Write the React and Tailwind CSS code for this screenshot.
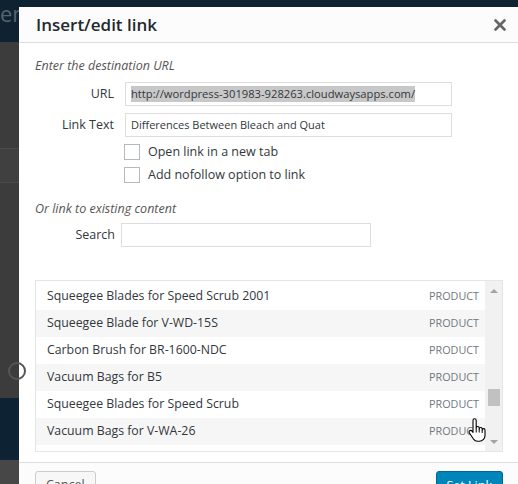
import { X } from 'lucide-react';

const results = [
  'Squeegee Blades for Speed Scrub 2001',
  'Squeegee Blade for V-WD-15S',
  'Carbon Brush for BR-1600-NDC',
  'Vacuum Bags for B5',
  'Squeegee Blades for Speed Scrub',
  'Vacuum Bags for V-WA-26',
];

function HandCursor() {
  return (
    <svg width="18" height="24" viewBox="0 0 18 24" className="absolute left-[468px] top-[418px]">
      <path
        d="M5 2.5c0-1 .7-1.7 1.6-1.7s1.6.7 1.6 1.7V10c0-.9.7-1.5 1.5-1.5s1.5.6 1.5 1.5v1c0-.9.7-1.5 1.5-1.5s1.5.6 1.5 1.5v1c0-.8.6-1.4 1.4-1.4s1.4.6 1.4 1.4v5.5c0 3-2.2 5.7-5.6 5.7H9.6c-2 0-3.2-.9-4.3-2.4L1.4 15c-.6-.8-.4-1.8.4-2.3.8-.5 1.7-.3 2.3.4L5 14.4Z"
        fill="#fff"
        stroke="#000"
        strokeWidth="1.1"
        strokeLinejoin="round"
      />
      <path d="M8.2 10v4.5M11.2 11v3.5M14.2 12v3" stroke="#000" strokeWidth="1" />
    </svg>
  );
}

function Row({ title, i }) {
  return (
    <div className={`flex h-[27px] items-center justify-between pl-[11px] pr-[6px] ${i % 2 ? 'bg-[#f6f6f6]' : 'bg-white'}`}>
      <span className="text-[12.3px] text-[#32373c]">{title}</span>
      <span className="text-[10.8px] uppercase text-[#72777c]">Product</span>
    </div>
  );
}

export default function App() {
  return (
    <div
      className="relative flex h-[484px] w-[518px] overflow-hidden bg-[#0e2232]"
      style={{ fontFamily: '"Open Sans", "Noto Sans", sans-serif' }}
    >
      {/* dimmed admin behind the modal */}
      <div className="flex w-[19px] shrink-0 flex-col">
        <div className="h-[42px] overflow-hidden bg-[#0e2232] pt-[2px] text-[22px] leading-none text-[#58646d]">em</div>
        <div className="h-[106px] bg-[#3c3c3c]" />
        <div className="h-[35px] border-y border-[#4a4a4a] bg-[#404040]" />
        <div className="relative h-[215px] bg-[#3c3c3c]">
          <div className="absolute left-[8px] top-[179px] h-[18px] w-[18px] rounded-full border-2 border-[#555]" />
        </div>
        <div className="h-[62px] bg-[#0d2333]" />
        <div className="flex-1 bg-[#474747]" />
      </div>

      {/* modal */}
      <div className="mt-[7px] flex w-[510px] shrink-0 flex-col bg-white">
        <div className="flex h-[36px] shrink-0 items-center justify-between border-b border-[#dddddd] bg-[#fcfcfc] pl-[17px] pr-[20px]">
          <h1 className="text-[17px] font-semibold text-[#23282d]">Insert/edit link</h1>
          <X size={18} strokeWidth={3.6} className="text-[#666]" />
        </div>

        <div className="flex flex-col pl-[16px] pt-[14px]">
          <p className="text-[12.5px] italic leading-[18px] text-[#555]">Enter the destination URL</p>

          <div className="mt-[7px] flex flex-col gap-[7px]">
            <div className="flex items-center">
              <label className="w-[80px] pr-[1px] text-right text-[12.5px] text-[#32373c]">URL</label>
              <div className="ml-[10px] flex h-[24px] w-[327px] items-center overflow-hidden whitespace-nowrap border border-[#dddddd] px-[5px] text-[11.2px] text-[#32373c]">
                <span className="bg-[#c8c8c8]">http://wordpress-301983-928263.cloudwaysapps.com/</span>
              </div>
            </div>
            <div className="flex items-center">
              <label className="w-[80px] pr-[1px] text-right text-[12.5px] text-[#32373c]">Link Text</label>
              <div className="ml-[10px] flex h-[24px] w-[327px] items-center whitespace-nowrap border border-[#dddddd] px-[5px] text-[11px] text-[#32373c]">
                Differences Between Bleach and Quat
              </div>
            </div>
          </div>

          <div className="ml-[89px] mt-[7px] flex flex-col gap-[7px]">
            <label className="flex items-center gap-[8px] text-[12.5px] leading-[16px] text-[#32373c]">
              <span className="h-[16px] w-[16px] border border-[#b4b9be] bg-white" />
              Open link in a new tab
            </label>
            <label className="flex items-center gap-[8px] text-[12.5px] leading-[16px] text-[#32373c]">
              <span className="h-[16px] w-[16px] border border-[#b4b9be] bg-white" />
              Add nofollow option to link
            </label>
          </div>

          <p className="mt-[17px] text-[12.5px] italic leading-[18px] text-[#555]">Or link to existing content</p>

          <div className="mt-[5px] flex items-center">
            <label className="w-[80px] text-right text-[12.5px] text-[#32373c]">Search</label>
            <div className="ml-[6px] h-[24px] w-[250px] border border-[#dddddd]" />
          </div>

          <div className="mt-[33px] flex h-[172px] w-[468px] border border-[#e5e5e5] bg-white">
            <div className="flex flex-1 flex-col pt-[2px]">
              {results.map((r, i) => (
                <Row key={r} title={r} i={i} />
              ))}
            </div>
            <div className="flex w-[17px] flex-col items-center bg-[#f1f1f1]">
              <span className="mt-[8px] h-0 w-0 border-x-[4px] border-b-[4px] border-x-transparent border-b-[#a3a3a3]" />
              <span className="mt-[96px] h-[17px] w-[12px] bg-[#c1c1c1]" />
              <span className="mt-[34px] h-0 w-0 border-x-[4px] border-t-[4px] border-x-transparent border-t-[#a3a3a3]" />
            </div>
          </div>
        </div>

        <div className="mt-[10px] flex flex-1 border-t border-[#dddddd] bg-[#fcfcfc] pl-[16px] pt-[8px]">
          <div className="flex w-[468px] justify-between">
            <button className="h-[28px] rounded-[3px] border border-[#cccccc] bg-[#f7f7f7] px-[10px] text-[12.5px] text-[#555]">Cancel</button>
            <button className="h-[30px] rounded-[3px] border border-[#006799] bg-[#0085ba] px-[10px] text-[12.5px] text-white">Set Link</button>
          </div>
        </div>
      </div>

      <HandCursor />
    </div>
  );
}
